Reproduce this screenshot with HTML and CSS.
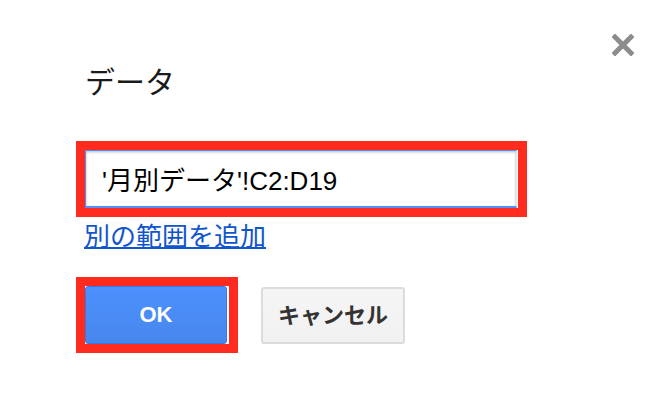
FILE: index.html
```html
<!DOCTYPE html>
<html lang="ja">
<head>
<meta charset="utf-8">
<link rel="stylesheet" href="styles.css">
</head>
<body>
<div class="dialog">
  <button class="close" aria-label="閉じる">
    <svg width="22" height="22" viewBox="0 0 22 22"><path d="M3 3 L19 19 M19 3 L3 19" stroke="#8c8c8c" stroke-width="5" stroke-linecap="square"/></svg>
  </button>
  <h1 class="title">データ</h1>
  <div class="hl field-hl">
    <input class="range" type="text" value="'月別データ'!C2:D19">
  </div>
  <a class="add" href="#">別の範囲を追加</a>
  <div class="actions">
    <div class="hl ok-hl"><button class="btn ok">OK</button></div>
    <button class="btn cancel">キャンセル</button>
  </div>
</div>
</body>
</html>
```
FILE: styles.css
```css
html, body {
  margin: 0;
  padding: 0;
  background: #fff;
}
body {
  font-family: "Liberation Sans", Arial, "Noto Sans CJK JP", sans-serif;
  color: #222;
}
.dialog {
  position: relative;
  width: 666px;
  height: 402px;
  box-sizing: border-box;
  padding: 0 0 0 76px;
  display: flex;
  flex-direction: column;
  align-items: flex-start;
}
.close {
  position: absolute;
  top: 34px;
  left: 612px;
  width: 22px;
  height: 22px;
  padding: 0;
  border: 0;
  background: none;
}
.close svg { display: block; }
.title {
  margin: 62px 0 0 9px;
  font-family: "Noto Sans CJK JP", sans-serif;
  font-weight: 400;
  font-size: 30px;
  line-height: 36px;
  color: #1a1a1a;
}
.hl {
  border: 9px solid #ff2b1f;
}
.field-hl {
  margin-top: 43px;
  width: 433px;
  height: 58px;
}
.range {
  display: block;
  box-sizing: border-box;
  width: 432px;
  height: 58px;
  margin: 0;
  padding: 0 0 0 16px;
  border: 1px solid #4d90fe;
  border-bottom-width: 2px;
  border-right-color: #e4e4e4;
  box-shadow: inset 0 1px 3px rgba(0,0,0,.28);
  outline: none;
  font-family: "Liberation Sans", Arial, "Noto Sans CJK JP", sans-serif;
  font-size: 26px;
  color: #000;
  background: #fff;
}
.add {
  margin: 3px 0 0 8px;
  font-family: "Noto Sans CJK JP", sans-serif;
  font-size: 26px;
  line-height: 30px;
  color: #1155cc;
  text-decoration: underline;
  text-underline-offset: 1px;
}
.actions {
  margin-top: 27px;
  display: flex;
  align-items: flex-start;
}
.ok-hl {
  padding-right: 2px;
  height: 58px;
}
.btn {
  box-sizing: border-box;
  margin: 0;
  font-family: "Liberation Sans", Arial, "Noto Sans CJK JP", sans-serif;
  font-weight: 700;
  font-size: 22px;
  border-radius: 3px;
}
.ok {
  width: 142px;
  height: 58px;
  color: #fff;
  background: linear-gradient(#4d90fe, #4787ed);
  border: 1px solid #3079ed;
}
.cancel {
  margin: 10px 0 0 23px;
  width: 144px;
  height: 57px;
  padding: 0 0 5px;
  color: #333;
  background: linear-gradient(#f5f5f5, #f1f1f1);
  border: 2px solid #dcdcdc;
  font-family: "Noto Sans CJK JP", sans-serif;
}
```
